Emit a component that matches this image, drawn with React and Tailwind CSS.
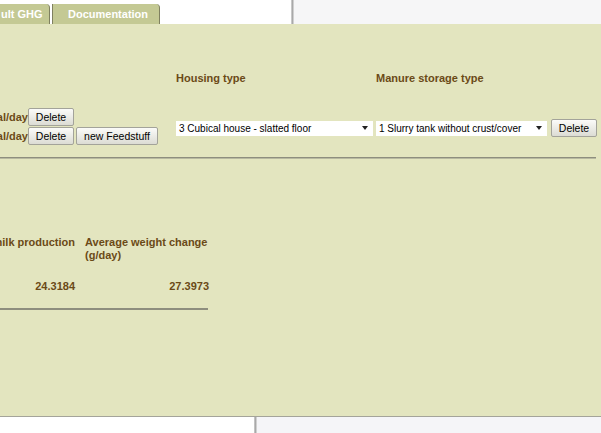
export default function App() {
  const brown = "text-[#6b4a17]";
  const btn =
    "h-[18px] rounded-[2px] border border-[#a3a39a] bg-gradient-to-b from-[#fbfbf9] to-[#dcdcd4] text-[10.5px] text-black leading-none [font-family:'Liberation_Sans',Arial,sans-serif]";
  return (
    <div className="w-[601px] h-[433px] overflow-hidden bg-white [font-family:'Liberation_Sans',Arial,sans-serif]">
      {/* top strip */}
      <div className="flex h-[24px]">
        <div className="w-[291px] bg-white flex items-end gap-[2px]">
          <div className="h-[20px] w-[50px] bg-[#c4c994] rounded-tr-[4px] border-r border-[#7f8060] flex items-center pl-[1px] text-white font-bold text-[11px]">
            ult GHG
          </div>
          <div className="h-[20px] w-[108px] bg-[#c4c994] rounded-tr-[4px] border-l border-r border-[#7f8060] flex items-center pl-[15px] text-white font-bold text-[11px]">
            Documentation
          </div>
        </div>
        <div className="w-[3px] bg-gradient-to-r from-[#d8d8d8] via-[#a9a9a9] to-[#e4e4e4]" />
        <div className="flex-1 bg-[#f6f6f7]" />
      </div>

      {/* green panel */}
      <div className="h-[392px] bg-[#e3e5bf] overflow-hidden">
        {/* header row */}
        <div className="flex pt-[48px] h-[84px]">
          <div className="w-[176px]" />
          <div className={`w-[200px] font-bold text-[11px] leading-[13px] ${brown}`}>Housing type</div>
          <div className={`font-bold text-[11px] leading-[13px] ${brown}`}>Manure storage type</div>
        </div>

        {/* feed / housing row */}
        <div className="flex">
          <div className="w-[176px] flex flex-col gap-[1px]">
            <div className="flex items-center h-[18px]">
              <div className="w-[28px] flex justify-end overflow-hidden">
                <span className={`whitespace-nowrap font-bold text-[11px] ${brown}`}>kg/animal/day</span>
              </div>
              <button className={`${btn} w-[46px]`}>Delete</button>
            </div>
            <div className="flex items-center h-[18px]">
              <div className="w-[28px] flex justify-end overflow-hidden">
                <span className={`whitespace-nowrap font-bold text-[11px] ${brown}`}>kg/animal/day</span>
              </div>
              <button className={`${btn} w-[46px]`}>Delete</button>
              <button className={`${btn} w-[82px] ml-[2px]`}>new Feedstuff</button>
            </div>
          </div>
          <div className="flex items-center mt-[11px] h-[18px]">
            <div className="w-[197px] h-[15px] bg-white flex items-center justify-between pl-[3px] pr-[5px] text-[10px] text-black">
              <span>3 Cubical house - slatted floor</span>
              <svg width="6" height="4" viewBox="0 0 6 4"><path d="M0 0h6L3 4z" fill="#222" /></svg>
            </div>
            <div className="w-[171px] h-[15px] bg-white flex items-center justify-between pl-[3px] pr-[5px] ml-[3px] text-[10px] text-black">
              <span>1 Slurry tank without crust/cover</span>
              <svg width="6" height="4" viewBox="0 0 6 4"><path d="M0 0h6L3 4z" fill="#222" /></svg>
            </div>
            <button className={`${btn} w-[46px] ml-[4px]`}>Delete</button>
          </div>
        </div>

        <div className="w-[596px] h-[2px] mt-[12px] bg-[#8e8e7e] border-b border-[#b8b9a0]" />

        {/* results */}
        <div className="flex mt-[77px]">
          <div className="w-[75px] flex justify-end overflow-hidden">
            <span className={`whitespace-nowrap font-bold text-[11px] leading-[13px] ${brown}`}>Average milk production</span>
          </div>
          <div className={`ml-[10px] w-[124px] font-bold text-[11px] leading-[13px] ${brown}`}>
            Average weight change (g/day)
          </div>
        </div>
        <div className="flex mt-[18px]">
          <div className={`w-[75px] text-right font-bold text-[11px] leading-[13px] ${brown}`}>24.3184</div>
          <div className={`w-[134px] text-right font-bold text-[11px] leading-[13px] ${brown}`}>27.3973</div>
        </div>
        <div className="w-[208px] h-[2px] mt-[15px] bg-[#8e8e7e]" />
      </div>

      {/* bottom */}
      <div className="h-[1px] bg-[#a4a49a]" />
      <div className="flex h-[16px]">
        <div className="w-[254px] bg-white" />
        <div className="w-[3px] bg-gradient-to-r from-[#d0d0d0] via-[#a9a9a9] to-[#e4e4e4]" />
        <div className="flex-1 bg-[#f5f5f8]" />
      </div>
    </div>
  );
}
